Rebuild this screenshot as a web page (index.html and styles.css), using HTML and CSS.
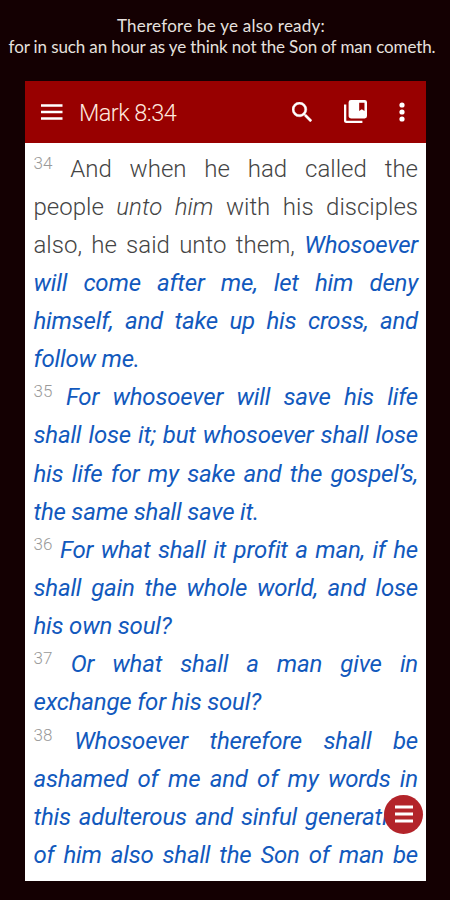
FILE: index.html
```
<!DOCTYPE html>
<html lang="en">
<head>
<meta charset="utf-8">
<title>Mark 8:34</title>
<link rel="stylesheet" href="styles.css">
</head>
<body>
<header class="quote">
  <p class="quote-first">Therefore be ye also ready:</p>
  <p class="quote-second">for in such an hour as ye think not the Son of man cometh.</p>
</header>
<main class="app">
  <nav class="toolbar">
    <svg class="menu" viewBox="0 0 22 16"><path d="M0 1.5h21.5M0 8h21.5M0 14.5h21.5" stroke="#fff" stroke-width="2.4"/></svg>
    <h1>Mark 8:34</h1>
    <svg class="search" viewBox="3 3 17.49 17.49"><path fill="#fff" stroke="#fff" stroke-width=".3" d="M15.5 14h-.79l-.28-.27A6.47 6.47 0 0 0 16 9.5 6.5 6.5 0 1 0 9.5 16c1.61 0 3.09-.59 4.23-1.57l.27.28v.79l5 4.99L20.49 19l-4.99-5zm-6 0a4.5 4.5 0 1 1 0-9 4.5 4.5 0 0 1 0 9z"/></svg>
    <svg class="books" viewBox="2 2 20 20"><path fill="#fff" fill-rule="evenodd" d="M4 6H2v14c0 1.1.9 2 2 2h14v-2H4V6zM20 2H8a2 2 0 0 0-2 2v12c0 1.1.9 2 2 2h12a2 2 0 0 0 2-2V4a2 2 0 0 0-2-2zm-.2 9.5-2.3-1.4-2.3 1.4V4.4h4.6v7.1z"/></svg>
    <svg class="more" viewBox="0 0 6 20"><g fill="#fff"><circle cx="3" cy="3" r="2.6"/><circle cx="3" cy="10" r="2.6"/><circle cx="3" cy="17" r="2.6"/></g></svg>
  </nav>
  <article class="text">
    <p><sup>34</sup> And when he had called the</p>
    <p>people <i>unto him</i> with his disciples</p>
    <p>also, he said unto them, <em>Whosoever</em></p>
    <p><em>will come after me, let him deny</em></p>
    <p><em>himself, and take up his cross, and</em></p>
    <p class="end"><em>follow me.</em></p>
    <p><sup>35</sup> <em>For whosoever will save his life</em></p>
    <p><em>shall lose it; but whosoever shall lose</em></p>
    <p><em>his life for my sake and the gospel’s,</em></p>
    <p class="end"><em>the same shall save it.</em></p>
    <p><sup>36</sup> <em>For what shall it profit a man, if he</em></p>
    <p><em>shall gain the whole world, and lose</em></p>
    <p class="end"><em>his own soul?</em></p>
    <p><sup>37</sup> <em>Or what shall a man give in</em></p>
    <p class="end"><em>exchange for his soul?</em></p>
    <p><sup>38</sup> <em>Whosoever therefore shall be</em></p>
    <p><em>ashamed of me and of my words in</em></p>
    <p><em>this adulterous and sinful generation;</em></p>
    <p><em>of him also shall the Son of man be</em></p>
  </article>
  <button class="fab" aria-label="Menu"><svg viewBox="0 0 20 18"><path d="M1 2h18M1 9h18M1 16h18" stroke="#fff" stroke-width="3"/></svg></button>
</main>
</body>
</html>
```
FILE: styles.css
```
* { box-sizing: border-box; }
body { margin: 0; height: 900px; overflow: hidden; background: #140002; font-family: Roboto, sans-serif; }
p, h1 { margin: 0; }
.quote { height: 80.5px; padding-top: 15px; color: #e6e1df; font-family: Lato, sans-serif; font-size: 17px; line-height: 21px; text-align: center; white-space: nowrap; }
.quote-first { width: 442px; letter-spacing: .25px; }
.quote-second { width: 444px; letter-spacing: -.12px; }
.app { position: relative; width: 401px; height: 800.5px; margin-left: 25px; background: #fff; overflow: hidden; }
.toolbar { display: flex; align-items: center; height: 62px; padding: 0 21px 0 16px; background: #980000; }
.menu { width: 22px; height: 16px; margin-right: 16px; }
h1 { flex: 1; padding-top: 2px; color: #ffe9df; font-size: 23.5px; font-weight: 300; letter-spacing: -.55px; }
.search { width: 20px; height: 20px; margin-right: 32px; }
.books { width: 23px; height: 23px; margin-right: 32px; }
.more { width: 6px; height: 20px; }
.text { padding: 7px 8px 0 8.5px; color: #444; font-size: 24px; font-weight: 300; line-height: 38.15px; }
.text p { height: 38.15px; white-space: nowrap; text-align: justify; text-align-last: justify; }
.text .end { text-align-last: left; }
em { color: #1259bd; font-weight: 400; letter-spacing: -.2px; }
sup { color: #999; font-size: 17px; line-height: 0; vertical-align: 8px; }
.fab { position: absolute; left: 359px; top: 714px; display: grid; place-items: center; width: 39px; height: 39px; padding: 0; border: 0; border-radius: 50%; background: #b3242a; }
.fab svg { width: 20px; height: 18px; }
```
